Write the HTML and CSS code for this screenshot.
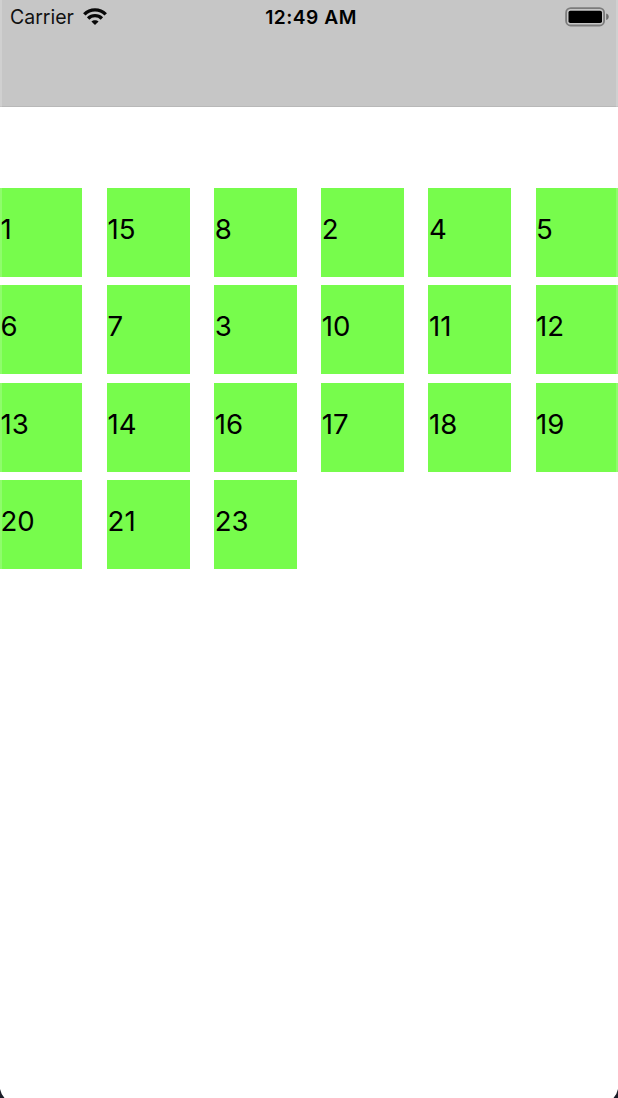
FILE: index.html
```html
<!DOCTYPE html>
<html lang="en">
<head>
<meta charset="utf-8">
<title>Grid</title>
<link rel="stylesheet" href="styles.css">
</head>
<body>
<div class="screen">
  <header class="navbar">
    <div class="status">
      <div class="carrier">
        <span>Carrier</span>
        <svg class="wifi" width="24" height="18" viewBox="0 0 24 18" fill="none" stroke="#080808" stroke-width="3.4">
          <path d="M1.3 6.4C7.2 .3 16.8 .3 22.7 6.4"/>
          <path d="M5.1 10.5C9 6.7 15 6.7 18.9 10.5"/>
          <path d="M12 17L8.4 13.6C10.4 11.7 13.6 11.7 15.6 13.6Z" fill="#080808" stroke="none"/>
        </svg>
      </div>
      <div class="time">12:49 AM</div>
      <svg class="battery" width="45" height="20" viewBox="0 0 45 20">
        <rect x="1.1" y="1.1" width="38" height="17.4" rx="4.6" fill="none" stroke="#7c7c7c" stroke-width="1.8"/>
        <rect x="3.5" y="3.7" width="33.5" height="12.4" rx="1.8" fill="#000"/>
        <path d="M41.2 6.6C44.6 7.4 44.6 12.3 41.2 13.1Z" fill="#6c6c6c"/>
      </svg>
    </div>
  </header>
  <main class="grid">
    <div class="cell">1</div><div class="cell">15</div><div class="cell">8</div><div class="cell">2</div><div class="cell">4</div><div class="cell">5</div>
    <div class="cell">6</div><div class="cell">7</div><div class="cell">3</div><div class="cell">10</div><div class="cell">11</div><div class="cell">12</div>
    <div class="cell">13</div><div class="cell">14</div><div class="cell">16</div><div class="cell">17</div><div class="cell">18</div><div class="cell">19</div>
    <div class="cell">20</div><div class="cell">21</div><div class="cell">23</div>
  </main>
  <svg class="corner corner-left" width="5" height="9" viewBox="0 0 5 9"><path d="M0 0Q1 5 4.5 9H0Z" fill="#1b1d28"/></svg>
  <svg class="corner corner-right" width="5" height="9" viewBox="0 0 5 9"><path d="M5 0Q4 5 .5 9H5Z" fill="#1b1d28"/></svg>
</div>
</body>
</html>
```
FILE: styles.css
```css
* { box-sizing: border-box; }
body {
  margin: 0;
  background: #fff;
  color: #000;
  font-family: Inter, "Liberation Sans", sans-serif;
}
.screen {
  position: relative;
  height: 1098px;
  overflow: hidden;
}
/* Light window edge on both sides */
.screen::before {
  content: "";
  position: absolute;
  inset: 0;
  border: solid rgba(255, 255, 255, .18);
  border-width: 0 2px;
}
.navbar {
  height: 107px;
  background: #c6c6c6;
  border-bottom: 1px solid #b8b8b8;
}
.status {
  display: grid;
  grid-template-columns: 1fr auto 1fr;
  align-items: center;
  height: 34px;
  padding: 0 8px 0 10px;
}
.carrier {
  display: flex;
  align-items: center;
  gap: 9px;
  font-size: 19.5px;
  color: #111;
}
.time {
  padding-left: 2px;
  font-size: 19.2px;
  font-weight: 600;
  letter-spacing: .5px;
}
.battery { justify-self: end; }
.grid {
  display: grid;
  grid-template-columns: repeat(6, 82.4px);
  grid-auto-rows: 89.2px;
  justify-content: space-between;
  row-gap: 8.1px;
  padding-top: 81px;
}
.cell {
  display: flex;
  align-items: center;
  padding: 0 0 7px .5px;
  background: #77fc4c;
  font-size: 27.6px;
  line-height: 34px;
}
.corner { position: absolute; bottom: 0; }
.corner-left { left: 0; }
.corner-right { right: 0; }
```
